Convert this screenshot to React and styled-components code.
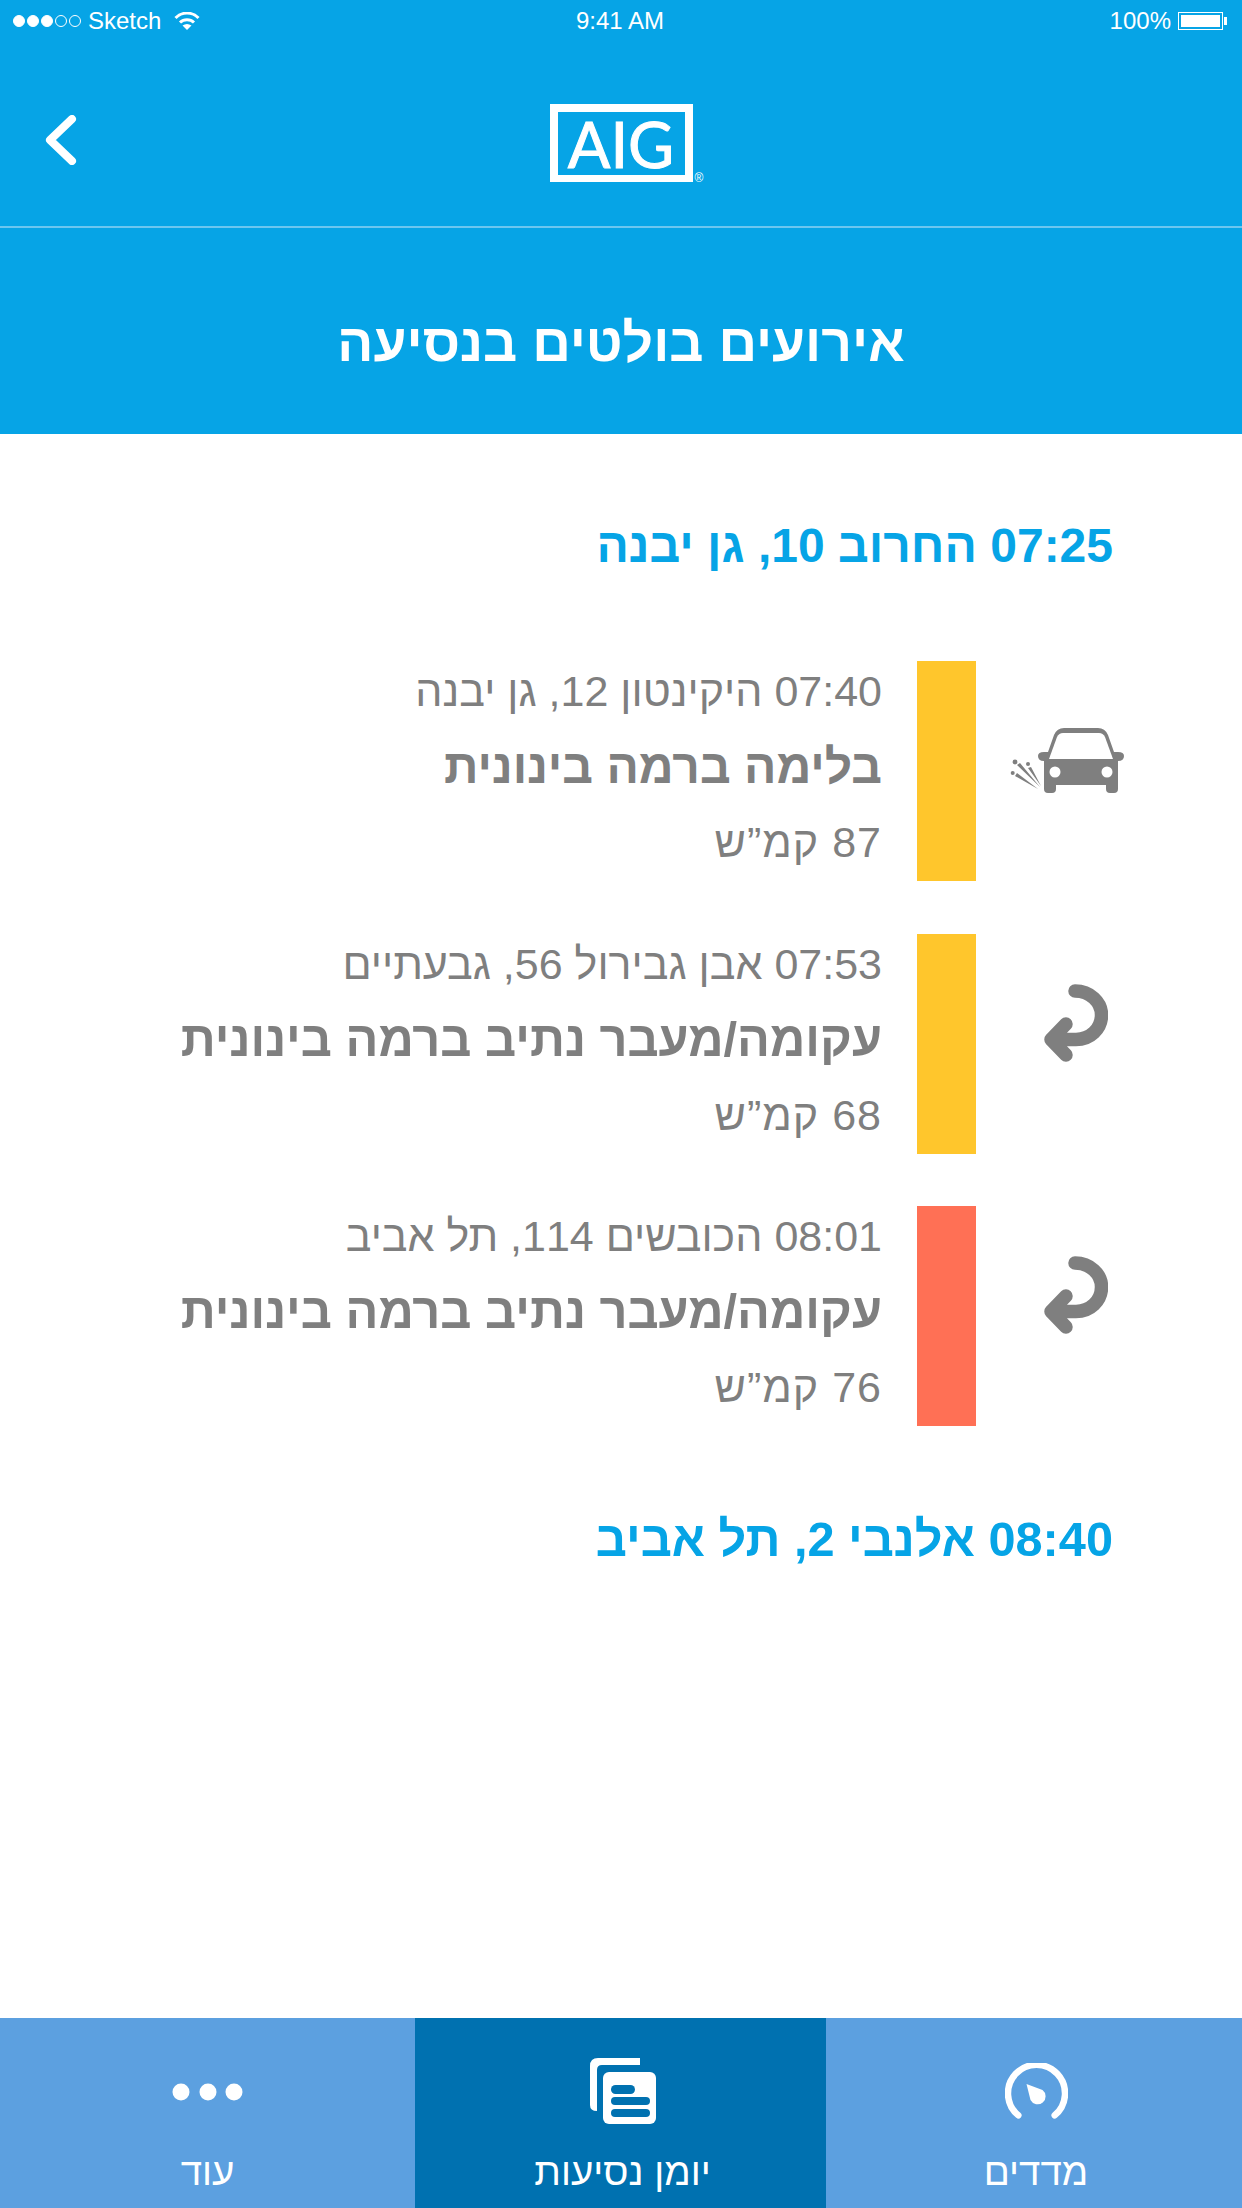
import React from 'react';
import styled, { createGlobalStyle } from 'styled-components';

const Global = createGlobalStyle`
  html, body { margin: 0; padding: 0; background: #fff; }
  * { box-sizing: border-box; }
`;
const HEB = '"Liberation Sans", "DejaVu Sans", sans-serif';

const Page = styled.div`
  width: 1242px; height: 2208px; display: flex; flex-direction: column; background: #fff; font-family: ${HEB};
`;
const Header = styled.header`
  height: 434px; background: #06a4e6; color: #fff; display: flex; flex-direction: column;
`;
const StatusBar = styled.div`
  height: 42px; display: grid; grid-template-columns: 1fr auto 1fr; align-items: center; padding: 0 15px 0 13px;
  font: 24px "Liberation Sans", sans-serif; color: #fff;
`;
const StatusLeft = styled.div`display: flex; align-items: center; gap: 13px;`;
const Carrier = styled.div`display: flex; align-items: center; gap: 7px;`;
const StatusRight = styled.div`display: flex; align-items: center; justify-content: flex-end; gap: 7px; padding-right: 4px;`;
const Signal = styled.div`display: flex; gap: 2px;`;
const Dot = styled.span`
  width: 12px; height: 12px; border-radius: 50%; border: 1px solid #fff; background: ${p => (p.$on ? '#fff' : 'transparent')};
`;
const Battery = styled.div`
  width: 45px; height: 18px; border: 1px solid #fff; padding: 2px; position: relative;
  &::before { content: ''; display: block; height: 100%; background: #fff; }
  &::after { content: ''; position: absolute; right: -5px; top: 4px; width: 3px; height: 8px; background: #fff; }
`;
const NavBar = styled.div`
  height: 186px; border-bottom: 2px solid #6cc6ef; display: flex; align-items: flex-start; justify-content: center; position: relative; padding-top: 62px;
`;
const BackButton = styled.div`position: absolute; left: 44px; top: 73px; display: flex;`;
const Logo = styled.div`
  width: 143px; height: 78px; border: 8px solid #fff; border-bottom-width: 7px; position: relative;
  display: flex; align-items: center; justify-content: center;
  font: 400 63px/1 Lato, "Liberation Sans", sans-serif; -webkit-text-stroke: 1px #fff; color: #fff;
`;
const Registered = styled.span`
  position: absolute; left: 137px; top: 60px; font: 12px/1 "Liberation Sans", sans-serif; -webkit-text-stroke: 0;
`;
const TitleBar = styled.div`
  flex: 1; display: flex; align-items: center; justify-content: center; padding-top: 22px;
  direction: rtl; font-size: 53.5px; font-weight: 700;
`;
const Main = styled.main`
  flex: 1; direction: rtl; padding: 79px 129px 0 0; display: flex; flex-direction: column;
`;
const Stop = styled.div`
  height: 66px; line-height: 66px; color: #06a4e6; font-size: ${p => p.$size}px; font-weight: 700;
`;
const Events = styled.div`
  display: flex; flex-direction: column; gap: 52.5px; margin: 82px 0 80px;
`;
const EventRow = styled.div`
  display: flex; height: 220px; margin-right: -129px;
`;
const IconCell = styled.div`
  width: 266px; display: flex; align-items: flex-start; padding-top: ${p => p.$top}px; padding-right: ${p => p.$inset}px;
`;
const Severity = styled.div`
  width: 59px; height: 220px; background: ${p => p.$color};
`;
const EventText = styled.div`
  margin-right: 35px; display: flex; flex-direction: column; color: #7f7f7f;
`;
const Line = styled.div`
  height: 60px; line-height: 60px; font-size: 43px; white-space: nowrap;
`;
const Strong = styled(Line)`height: 91px; line-height: 91px; font-size: ${p => p.$size}px; font-weight: 700;`;
const Speed = styled(Line)`letter-spacing: 1px;`;
const TabBar = styled.nav`
  height: 190px; display: grid; grid-template-columns: 415px 411px 416px; color: #fff;
`;
const Tab = styled.div`
  background: ${p => (p.$active ? '#0071b0' : '#5ca0e0')}; display: flex; flex-direction: column; align-items: center; direction: rtl;
  padding: 40px 0 0 ${p => p.$nudge || 0}px;
`;
const TabIcon = styled.div`height: 67px; display: flex; align-items: center; justify-content: center;`;
const TabLabel = styled.div`font-size: 38.5px; line-height: 50px; margin-top: 22px;`;

const Car = () => (
  <svg width="114" height="65" viewBox="0 0 114 65" fill="#7f7f7f">
    <path d="M38 24 L44 7 Q47 0 54 0 H88 Q95 0 98 7 L104 24 H108 Q114 24 114 28 Q114 33 108 33 V61 Q108 65 104 65 H100 Q96 65 96 61 V57 H46 V61 Q46 65 42 65 H38 Q34 65 34 61 V33 Q28 33 28 28 Q28 24 34 24 Z" />
    <path d="M39 31 L47 9 Q49 5 53 5 H89 Q93 5 95 9 L103 31 Z" fill="#fff" />
    <circle cx="45" cy="44" r="5.5" fill="#fff" />
    <circle cx="97" cy="44" r="5.5" fill="#fff" />
    <circle cx="5" cy="34" r="2.4" /><circle cx="18" cy="36" r="2" /><circle cx="2.7" cy="45" r="2" />
    <path d="M7 37 L10 35 L30 59 Z M18 40 L21 39 L31 58 Z M5 48 L7 45 L28 61 Z" />
  </svg>
);
const Turn = () => (
  <svg width="64" height="78" viewBox="0 0 64 78" fill="none" stroke="#7f7f7f" strokeWidth="13.5" strokeLinecap="round" strokeLinejoin="round">
    <path d="M31 7 C46 7 57.5 18 57.5 31 C57.5 45 46 55.5 32 55.5 H7 M22 40 L7 55.5 L22 71" />
  </svg>
);
const More = () => (
  <svg width="72" height="18" viewBox="0 0 72 18" fill="#fff">
    <circle cx="9" cy="9" r="8.5" /><circle cx="36" cy="9" r="8.5" /><circle cx="62" cy="9" r="8.5" />
  </svg>
);
const Journal = () => (
  <svg width="66" height="67" viewBox="0 0 66 67" fill="#fff">
    <path d="M50 0 H8 Q0 0 0 8 V47 Q0 53 7 53 V12 Q7 7 12 7 H50 Z" />
    <rect x="13" y="14" width="53" height="52" rx="6" />
    <g fill="#0071b0">
      <rect x="21" y="27" width="24" height="9" rx="4.5" />
      <rect x="21" y="39" width="39" height="8" rx="4" />
      <rect x="21" y="51" width="39" height="8" rx="4" />
    </g>
  </svg>
);
const Gauge = () => (
  <svg width="63" height="57" viewBox="0 0 63 57">
    <path d="M13.3 52.3 A28.5 28.5 0 1 1 49.7 52.3" fill="none" stroke="#fff" strokeWidth="6.5" strokeLinecap="round" />
    <path d="M21.5 21 L37.5 27 A8 8 0 1 1 25.5 37 Z" fill="#fff" />
  </svg>
);
const Chevron = () => (
  <svg width="34" height="50" viewBox="0 0 34 50" fill="none" stroke="#fff" strokeWidth="8" strokeLinecap="round" strokeLinejoin="round">
    <path d="M28 4 L6 25 L28 46" />
  </svg>
);
const Wifi = () => (
  <svg width="26" height="18" viewBox="0 0 26 18" fill="none" stroke="#fff" strokeWidth="3">
    <path d="M1.5 6 A16 16 0 0 1 24.5 6 M6 10.5 A10 10 0 0 1 20 10.5" />
    <path d="M13 18 L8.5 13.5 Q13 10.5 17.5 13.5 Z" fill="#fff" stroke="none" />
  </svg>
);

const events = [
  { color: '#ffc62c', where: '07:40 היקינטון 12, גן יבנה', what: 'בלימה ברמה בינונית', size: 48, speed: '87 קמ”ש', icon: <Car />, top: 67, inset: 118 },
  { color: '#ffc62c', where: '07:53 אבן גבירול 56, גבעתיים', what: 'עקומה/מעבר נתיב ברמה בינונית', size: 48.7, speed: '68 קמ”ש', icon: <Turn />, top: 50, inset: 134 },
  { color: '#ff7055', where: '08:01 הכובשים 114, תל אביב', what: 'עקומה/מעבר נתיב ברמה בינונית', size: 48.7, speed: '76 קמ”ש', icon: <Turn />, top: 50, inset: 134 },
];

export default function App() {
  return (
    <Page>
      <Global />
      <Header>
        <StatusBar>
          <StatusLeft>
            <Carrier>
              <Signal>{[1, 1, 1, 0, 0].map((on, i) => <Dot key={i} $on={!!on} />)}</Signal>
              <span>Sketch</span>
            </Carrier>
            <Wifi />
          </StatusLeft>
          <span>9:41 AM</span>
          <StatusRight><span>100%</span><Battery /></StatusRight>
        </StatusBar>
        <NavBar>
          <BackButton><Chevron /></BackButton>
          <Logo>AIG<Registered>®</Registered></Logo>
        </NavBar>
        <TitleBar>אירועים בולטים בנסיעה</TitleBar>
      </Header>
      <Main>
        <Stop $size={48}>07:25 החרוב 10, גן יבנה</Stop>
        <Events>
          {events.map((e, i) => (
            <EventRow key={i}>
              <IconCell $top={e.top} $inset={e.inset}>{e.icon}</IconCell>
              <Severity $color={e.color} />
              <EventText>
                <Line>{e.where}</Line>
                <Strong $size={e.size}>{e.what}</Strong>
                <Speed>{e.speed}</Speed>
              </EventText>
            </EventRow>
          ))}
        </Events>
        <Stop $size={48.7}>08:40 אלנבי 2, תל אביב</Stop>
      </Main>
      <TabBar>
        <Tab><TabIcon><More /></TabIcon><TabLabel>עוד</TabLabel></Tab>
        <Tab $active $nudge={4}><TabIcon><Journal /></TabIcon><TabLabel>יומן נסיעות</TabLabel></Tab>
        <Tab $nudge={4}><TabIcon><Gauge /></TabIcon><TabLabel>מדדים</TabLabel></Tab>
      </TabBar>
    </Page>
  );
}
